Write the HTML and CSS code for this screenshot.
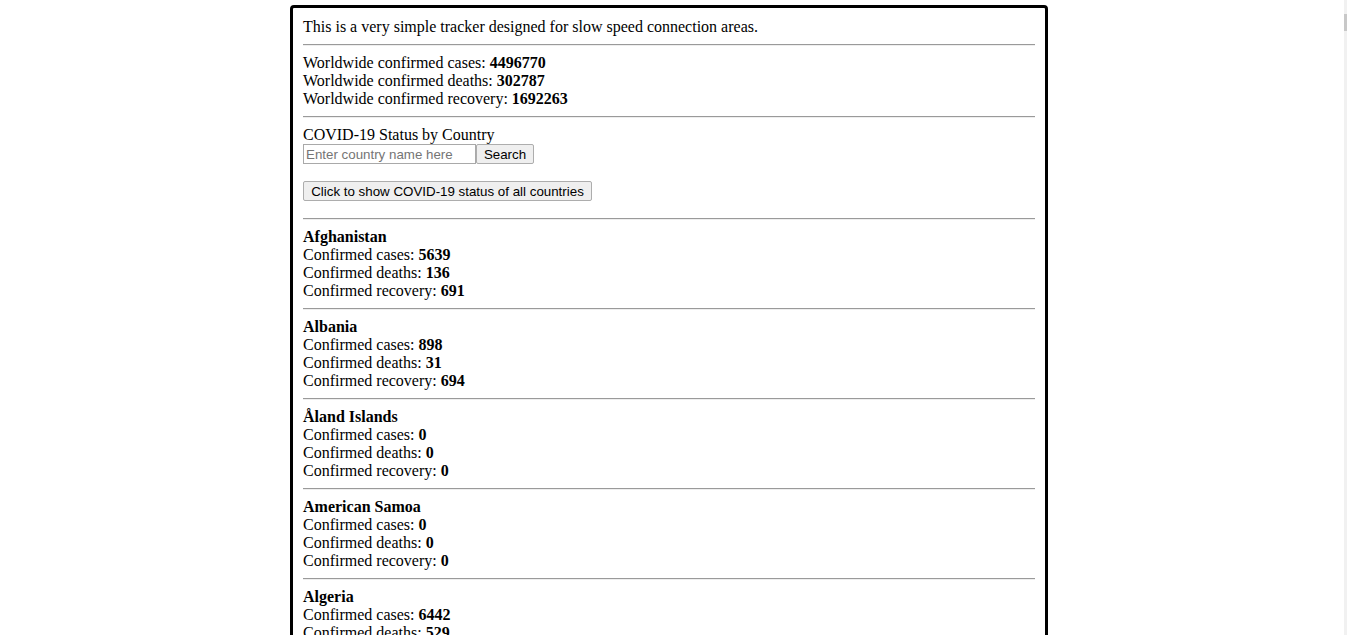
FILE: index.html
```html
<!DOCTYPE html>
<html lang="en">
<head>
<meta charset="utf-8">
<title>COVID-19 Tracker</title>
<link rel="stylesheet" href="styles.css">
</head>
<body>
<div class="box">
  <p class="intro">This is a very simple tracker designed for slow speed connection areas.</p>
  <hr class="rule">
  <div class="world">
    <div>Worldwide confirmed cases: <b>4496770</b></div>
    <div>Worldwide confirmed deaths: <b>302787</b></div>
    <div>Worldwide confirmed recovery: <b>1692263</b></div>
  </div>
  <hr class="rule">
  <div class="search">
    <div>COVID-19 Status by Country</div>
    <form class="search-row">
      <input class="search-input" type="text" placeholder="Enter country name here">
      <button class="btn search-btn" type="button">Search</button>
    </form>
    <button class="btn all-btn" type="button">Click to show COVID-19 status of all countries</button>
  </div>
  <hr class="rule">
  <div class="country">
    <div class="name">Afghanistan</div>
    <div>Confirmed cases: <b>5639</b></div>
    <div>Confirmed deaths: <b>136</b></div>
    <div>Confirmed recovery: <b>691</b></div>
  </div>
  <hr class="rule">
  <div class="country">
    <div class="name">Albania</div>
    <div>Confirmed cases: <b>898</b></div>
    <div>Confirmed deaths: <b>31</b></div>
    <div>Confirmed recovery: <b>694</b></div>
  </div>
  <hr class="rule">
  <div class="country">
    <div class="name">Åland Islands</div>
    <div>Confirmed cases: <b>0</b></div>
    <div>Confirmed deaths: <b>0</b></div>
    <div>Confirmed recovery: <b>0</b></div>
  </div>
  <hr class="rule">
  <div class="country">
    <div class="name">American Samoa</div>
    <div>Confirmed cases: <b>0</b></div>
    <div>Confirmed deaths: <b>0</b></div>
    <div>Confirmed recovery: <b>0</b></div>
  </div>
  <hr class="rule">
  <div class="country">
    <div class="name">Algeria</div>
    <div>Confirmed cases: <b>6442</b></div>
    <div>Confirmed deaths: <b>529</b></div>
    <div>Confirmed recovery: <b>3058</b></div>
  </div>
</div>
<div class="scroll-strip"><div class="scroll-thumb"></div></div>
</body>
</html>
```
FILE: styles.css
```css
html {
  overflow: hidden;
  background: #fff;
}

body {
  margin: 5px 9px 0 0;
  font-family: "Liberation Serif", "Times New Roman", serif;
  font-size: 16px;
  line-height: 18px;
  color: #000;
}

.box {
  width: 732px;
  margin: 0 auto;
  padding: 10px 10px 0 10px;
  border: 3px solid #000;
  border-radius: 4px;
}

.intro {
  margin: 0;
}

.rule {
  margin: 8px 0;
  height: 0;
  border: 0;
  border-top: 1px solid #9a9a9a;
  border-bottom: 1px solid #eeeeee;
}

.search {
  display: flex;
  flex-direction: column;
  align-items: flex-start;
  padding-bottom: 9px;
}

.search-row {
  display: flex;
  margin: 0;
}

.search-input {
  box-sizing: border-box;
  width: 173px;
  height: 20px;
  margin: 0;
  padding: 1px 2px;
  border: 1px solid #a9a9a9;
  font-family: "Liberation Sans", Arial, sans-serif;
  font-size: 13.33px;
  color: #000;
  background: #fff;
}

.search-input::placeholder {
  color: #757575;
}

.btn {
  box-sizing: border-box;
  height: 20px;
  margin: 0;
  padding: 1px 0 0 0;
  border: 1px solid #adadad;
  border-radius: 2px;
  background: #efefef;
  font-family: "Liberation Sans", Arial, sans-serif;
  font-size: 13.33px;
  line-height: 17px;
  white-space: nowrap;
  text-align: center;
  color: #000;
}

.search-btn {
  width: 58px;
}

.all-btn {
  width: 289px;
  margin-top: 17px;
}

.name {
  font-weight: bold;
}

.scroll-strip {
  position: fixed;
  top: 0;
  right: 0;
  width: 3px;
  height: 100%;
  background: #f1f1f1;
}

.scroll-thumb {
  margin-top: 14px;
  height: 17px;
  background: #c8c8c8;
}
```
